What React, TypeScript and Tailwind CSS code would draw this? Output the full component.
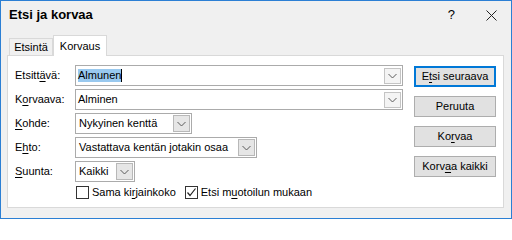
import React from "react";

const Chevron: React.FC = () => (
  <svg width="9" height="6" viewBox="0 0 9 6" className="block">
    <polyline points="0.5,1 4.5,5 8.5,1" fill="none" stroke="#5a5a5a" strokeWidth="1" />
  </svg>
);

const U: React.FC<{ children: React.ReactNode }> = ({ children }) => (
  <span className="underline underline-offset-[2px] decoration-1">{children}</span>
);

const TextCombo: React.FC<{ children: React.ReactNode }> = ({ children }) => (
  <div className="flex h-[21px] w-[328px] items-center border border-[#ababab] bg-white">
    <div className="flex flex-1 items-center pl-[2px]">{children}</div>
    <div className="mr-[1px] flex h-[16px] w-[17px] items-center justify-center border border-[#c4c4c4] bg-[#f4f4f4]">
      <Chevron />
    </div>
  </div>
);

const ListCombo: React.FC<{ width: string; value: string }> = ({ width, value }) => (
  <div className={`flex h-[21px] items-center border border-[#ababab] bg-white ${width}`}>
    <span className="flex-1 truncate pl-[3px]">{value}</span>
    <div className="mr-[1px] flex h-[17px] w-[17px] items-center justify-center border border-[#b8b8b8] bg-[#e6e6e6]">
      <Chevron />
    </div>
  </div>
);

const Row: React.FC<{ label: React.ReactNode; children: React.ReactNode }> = ({ label, children }) => (
  <div className="flex h-[21px] items-center">
    <span className="w-[60px]">{label}</span>
    {children}
  </div>
);

const Btn: React.FC<{ children: React.ReactNode; primary?: boolean }> = ({ children, primary }) => (
  <div
    className={`flex h-[21px] w-[82px] items-center justify-center bg-[#e1e1e1] ${
      primary ? "border-2 border-[#0078d7]" : "border border-[#adadad]"
    }`}
  >
    {children}
  </div>
);

const Checkbox: React.FC<{ checked?: boolean }> = ({ checked }) => (
  <div className="flex h-[13px] w-[13px] items-center justify-center border border-[#333333] bg-white">
    {checked && (
      <svg width="11" height="11" viewBox="0 0 11 11" className="block">
        <polyline points="1.5,5.5 4,8.5 9.5,1.5" fill="none" stroke="#222" strokeWidth="1.2" />
      </svg>
    )}
  </div>
);

export default function App() {
  return (
    <div className="flex h-[219px] w-[512px] flex-col border border-[#2b7fd4] bg-[#f0f0f0] font-['Liberation_Sans',Arial,sans-serif] text-[11px] leading-[13px] text-black">
      {/* title bar */}
      <div className="flex h-[34px] items-start pt-[5px] pl-[8px]">
        <span className="text-[13px] font-bold leading-[18px]">Etsi ja korvaa</span>
        <span className="ml-auto mt-[1px] text-[13px] leading-[16px]">?</span>
        <svg width="11" height="11" viewBox="0 0 11 11" className="mt-[4px] mr-[14px] ml-[31px] block">
          <path d="M0.5 0.5 L10.5 10.5 M10.5 0.5 L0.5 10.5" stroke="#222" strokeWidth="1" />
        </svg>
      </div>

      {/* tabs */}
      <div className="flex h-[20px] items-end pl-[8px]">
        <div className="flex h-[17px] w-[44px] items-center justify-center border border-b-0 border-[#d9d9d9] bg-[#f0f0f0]">
          Etsintä
        </div>
        <div className="relative z-10 -mb-px flex h-[21px] w-[54px] items-start justify-center border border-b-0 border-[#d9d9d9] bg-white pt-[4px]">
          Korvaus
        </div>
      </div>

      {/* panel */}
      <div className="ml-[6px] flex h-[153px] w-[497px] border border-[#d9d9d9] bg-white pt-[9px] pl-[7px]">
        <div className="flex flex-col gap-[3px]">
          <Row
            label={
              <>
                Etsitt<U>ä</U>vä:
              </>
            }
          >
            <TextCombo>
              <span className="bg-[#99c9ef]">Almunen</span>
              <span className="h-[13px] w-px bg-black" />
            </TextCombo>
          </Row>
          <Row
            label={
              <>
                K<U>o</U>rvaava:
              </>
            }
          >
            <TextCombo>
              <span>Alminen</span>
            </TextCombo>
          </Row>
          <Row
            label={
              <>
                <U>K</U>ohde:
              </>
            }
          >
            <ListCombo width="w-[117px]" value="Nykyinen kenttä" />
          </Row>
          <Row
            label={
              <>
                E<U>h</U>to:
              </>
            }
          >
            <ListCombo width="w-[182px]" value="Vastattava kentän jotakin osaa" />
          </Row>
          <Row
            label={
              <>
                <U>S</U>uunta:
              </>
            }
          >
            <ListCombo width="w-[60px]" value="Kaikki" />
          </Row>
          <div className="mt-[1px] flex h-[13px] items-center pl-[61px]">
            <Checkbox />
            <span className="ml-[3px]">
              Sama ki<U>r</U>jainkoko
            </span>
            <div className="ml-[9px]">
              <Checkbox checked />
            </div>
            <span className="ml-[3px]">
              Etsi m<U>u</U>otoilun mukaan
            </span>
          </div>
        </div>

        <div className="mt-[1px] ml-[11px] flex flex-col gap-[9px]">
          <Btn primary>
            <span>
              E<U>t</U>si seuraava
            </span>
          </Btn>
          <Btn>Peruuta</Btn>
          <Btn>
            <span>
              Ko<U>r</U>vaa
            </span>
          </Btn>
          <Btn>
            <span>
              Korv<U>a</U>a kaikki
            </span>
          </Btn>
        </div>
      </div>
    </div>
  );
}
